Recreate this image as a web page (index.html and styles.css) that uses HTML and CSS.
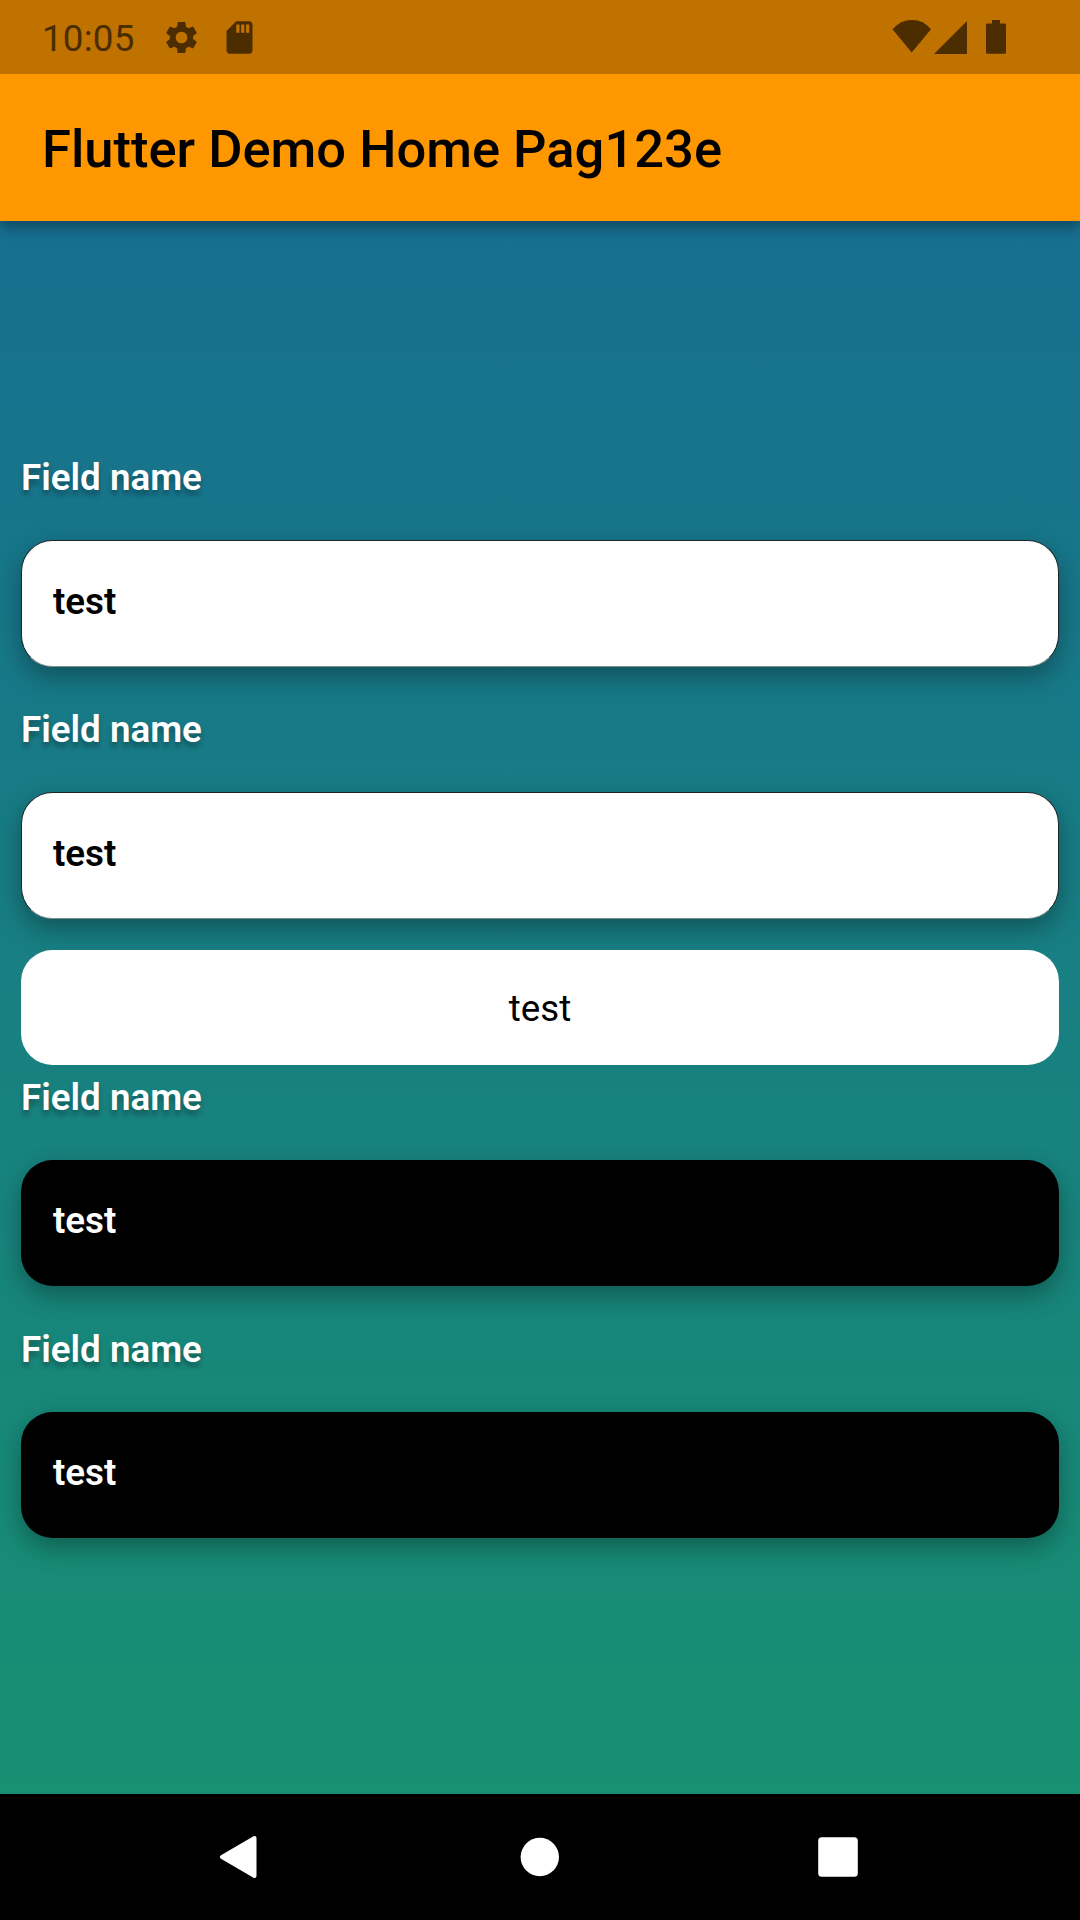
FILE: index.html
```html
<!DOCTYPE html>
<html lang="en">
<head>
<meta charset="utf-8">
<title>Flutter Demo</title>
<link rel="stylesheet" href="styles.css">
</head>
<body>
<div class="screen">
  <div class="status-bar">
    <span class="clock">10:05</span>
    <svg class="icon-gear" width="39" height="39" viewBox="0 0 24 24"><path d="M19.14 12.94c.04-.3.06-.61.06-.94s-.02-.64-.07-.94l2.03-1.58a.49.49 0 0 0 .12-.61l-1.92-3.32a.49.49 0 0 0-.59-.22l-2.39.96c-.5-.38-1.03-.7-1.62-.94l-.36-2.54a.48.48 0 0 0-.48-.41h-3.84a.47.47 0 0 0-.47.41l-.36 2.54c-.59.24-1.13.57-1.62.94l-2.39-.96a.48.48 0 0 0-.59.22L2.74 8.87a.47.47 0 0 0 .12.61l2.03 1.58c-.05.3-.09.63-.09.94s.02.64.07.94l-2.03 1.58a.49.49 0 0 0-.12.61l1.92 3.32c.12.22.37.29.59.22l2.39-.96c.5.38 1.03.7 1.62.94l.36 2.54c.05.24.24.41.48.41h3.84c.24 0 .44-.17.47-.41l.36-2.54c.59-.24 1.13-.56 1.62-.94l2.39.96c.22.08.47 0 .59-.22l1.92-3.32a.47.47 0 0 0-.12-.61zM12 15.6A3.6 3.6 0 1 1 12 8.400a3.600 3.600 0 0 1 0 7.200z"/></svg>
    <svg class="icon-sd" width="39" height="39" viewBox="0 0 24 24"><path d="M18 2h-8L4.02 8 4 20c0 1.100.9 2 2 2h12c1.100 0 2-.9 2-2V4c0-1.100-.9-2-2-2zm-6 7h-2V4h2zm3 0h-2V4h2zm3 0h-2V4h2z"/></svg>
    <div class="system-icons">
      <svg width="40" height="34" viewBox="0 0 40 34"><path d="M.5 9.300Q8.500 0 20 0T39 9.300L19.700 32.500z"/></svg>
      <svg class="icon-signal" width="33" height="33" viewBox="0 0 33 33"><path d="M0 33L33 0v33z"/></svg>
      <svg class="icon-battery" width="20" height="34" viewBox="0 0 20 34"><path d="M6 0h8v3.500h4.500Q20 3.500 20 5.200v27q0 1.600-1.600 1.600H1.600Q0 33.800 0 32.200v-27Q0 3.500 1.500 3.500H6z"/></svg>
    </div>
  </div>
  <header class="app-bar"><h1 class="title">Flutter Demo Home Pag123e</h1></header>
  <main class="content">
    <div class="field"><div class="label">Field name</div><div class="box box-light">test</div></div>
    <div class="field"><div class="label">Field name</div><div class="box box-light">test</div></div>
    <button class="button">test</button>
    <div class="field"><div class="label">Field name</div><div class="box box-dark">test</div></div>
    <div class="field"><div class="label">Field name</div><div class="box box-dark">test</div></div>
  </main>
  <nav class="nav-bar">
    <svg width="40" height="44" viewBox="0 0 40 44"><path d="M3 22L35.500 3v38z" fill="#fff" stroke="#fff" stroke-width="4" stroke-linejoin="round"/></svg>
    <svg width="40" height="40" viewBox="0 0 40 40"><circle cx="20.800" cy="20" r="19.200" fill="#fff"/></svg>
    <svg width="40" height="40" viewBox="0 0 40 40"><rect x=".2" y=".2" width="39.600" height="39.600" rx="3.500" fill="#fff"/></svg>
  </nav>
</div>
</body>
</html>
```
FILE: styles.css
```css
* { box-sizing: border-box; }
body { margin: 0; font-family: Roboto, sans-serif; }
.screen { width: 1080px; height: 1920px; display: flex; flex-direction: column; overflow: hidden; }
.status-bar { height: 74px; flex: none; display: flex; align-items: center; padding: 0 74px 0 42px; background: #bf7200; color: #4c2d00; fill: currentColor; position: relative; z-index: 2; }
.clock { width: 120px; font-size: 36.75px; line-height: 43px; padding-top: 2px; letter-spacing: .2px; }
.icon-sd { margin-left: 19px; }
.system-icons { display: flex; align-items: center; margin-left: auto; }
.icon-signal { margin-left: 2px; }
.icon-battery { margin-left: 19px; }
.app-bar { height: 147px; flex: none; display: flex; align-items: center; padding: 2px 42px 0; background: #ff9800; box-shadow: 0 7px 12px rgba(0,0,0,.32); position: relative; z-index: 1; }
.title { margin: 0; font-size: 52.5px; font-weight: 500; line-height: 62px; color: #000; }
.content { height: 1573px; flex: none; padding: 235px 21px 0; background: linear-gradient(#176f90, #189072); font-size: 36.75px; line-height: 43px; display: flex; flex-direction: column; }
.field { height: 252px; flex: none; }
.label { height: 84px; color: #fff; font-weight: 600; text-shadow: 0 5px 5px rgba(0,0,0,.3); }
.box { height: 126px; padding: 39px 32px 0; border-radius: 31.500px; font-weight: 600; box-shadow: 0 10px 26px rgba(0,0,0,.32); }
.box-light { height: 126.500px; padding: 39px 31px 0; background: #fff; color: #000; border: 1px solid #1c2426; border-bottom-color: #7f8c8e; }
.box-dark { background: #000; color: #fff; }
.button { height: 115.500px; flex: none; margin: -10.500px 0 11px; padding: 2px 0 0; border: 0; border-radius: 31.500px; background: #fff; color: #000; font: 400 36.75px/43px Roboto, sans-serif; }
.nav-bar { height: 126px; flex: none; display: flex; justify-content: space-between; align-items: center; padding: 0 222px 0 219px; background: #000; }
```
